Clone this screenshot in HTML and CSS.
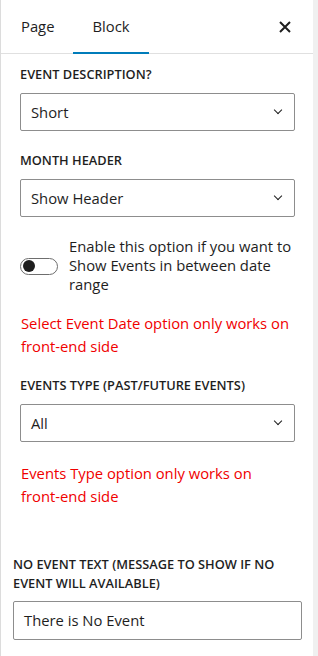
FILE: index.html
```html
<!DOCTYPE html>
<html lang="en">
<head>
  <meta charset="utf-8">
  <title>Block settings</title>
  <link rel="stylesheet" href="styles.css">
</head>
<body>
<div class="sidebar">
  <div class="tabs">
    <span class="tab">Page</span>
    <span class="tab tab--active">Block</span>
    <span class="close">
      <svg width="14" height="14" viewBox="0 0 14 14"><path d="M2 2 L12 12 M12 2 L2 12" stroke="#1e1e1e" stroke-width="2"/></svg>
    </span>
  </div>

  <div class="panel">
    <div class="field">
      <label class="field__label">Event Description?</label>
      <div class="select">Short <span class="chevron"></span></div>
    </div>

    <div class="field">
      <label class="field__label">Month Header</label>
      <div class="select">Show Header <span class="chevron"></span></div>
    </div>

    <div class="toggle-row">
      <span class="toggle"><span class="toggle__knob"></span></span>
      <span class="toggle-row__text">Enable this option if you want to Show Events in between date range</span>
    </div>

    <p class="notice">Select Event Date option only works on <span class="nowrap">front-end</span> side</p>

    <div class="field">
      <label class="field__label">Events Type (Past/Future Events)</label>
      <div class="select">All <span class="chevron"></span></div>
    </div>

    <p class="notice notice--last">Events Type option only works on <span class="nowrap">front-end</span> side</p>
  </div>

  <div class="panel panel--text">
    <label class="field__label">No Event Text (Message to show if no event will available)</label>
    <div class="input">There is No Event</div>
  </div>
</div>
</body>
</html>
```

FILE: styles.css
```css
body {
  margin: 0;
  background-color: #f0f0f0;
  font-family: 'Open Sans', sans-serif;
  color: #1e1e1e;
}

.sidebar {
  width: 313px;
  height: 656px;
  background-color: white;
  border-left: 1px solid #dcdcdc;
  box-sizing: border-box;
  overflow: hidden;
}

.tabs {
  display: flex;
  align-items: center;
  height: 53px;
  border-bottom: 1px solid #e0e0e0;
  padding-left: 1px;
}

.tab {
  height: 53px;
  line-height: 52px;
  padding: 0 19px;
  font-size: 14.8px;
  color: #1e1e1e;
  box-sizing: border-box;
}

.tab--active {
  border-bottom: 2px solid #007cba;
  line-height: 53px;
  margin-bottom: -1px;
  height: 54px;
}

.close {
  margin-left: auto;
  margin-right: 21px;
  display: flex;
}

.panel {
  padding: 11px 18px 0 19px;
}

.field__label {
  display: block;
  font-size: 12.8px;
  font-weight: 600;
  text-transform: uppercase;
  line-height: 19px;
  margin-bottom: 9px;
}

.field {
  margin-bottom: 20px;
}

.select, .input {
  position: relative;
  height: 38px;
  border: 1px solid #8d8d8d;
  border-radius: 2px;
  box-sizing: border-box;
  padding: 0 10px;
  font-size: 14.8px;
  line-height: 37px;
}

.chevron {
  position: absolute;
  right: 13px;
  top: 13px;
  width: 5px;
  height: 5px;
  border-right: 1.8px solid #1e1e1e;
  border-bottom: 1.8px solid #1e1e1e;
  transform: rotate(45deg);
}

.toggle-row {
  display: flex;
  align-items: center;
  gap: 11px;
  margin-top: 6px;
}

.toggle {
  flex: none;
  position: relative;
  width: 38px;
  height: 17px;
  border: 1.5px solid #6e6e6e;
  border-radius: 9px;
  box-sizing: border-box;
  margin-top: 1px;
}

.toggle__knob {
  position: absolute;
  left: 1.5px;
  top: 1px;
  width: 12px;
  height: 12px;
  border-radius: 50%;
  background-color: #1e1e1e;
}

.toggle-row__text {
  font-size: 14.8px;
  line-height: 19px;
}

.nowrap {
  white-space: nowrap;
}

.notice {
  color: #f00000;
  font-size: 14.8px;
  line-height: 23px;
  margin: 18px 0 18px 1px;
}

.notice--last {
  margin-top: 12px;
}

.panel--text {
  padding: 29px 11px 0 12px;
}

.panel--text .field__label {
  margin-bottom: 8px;
}

.input {
  height: 39px;
}
```
